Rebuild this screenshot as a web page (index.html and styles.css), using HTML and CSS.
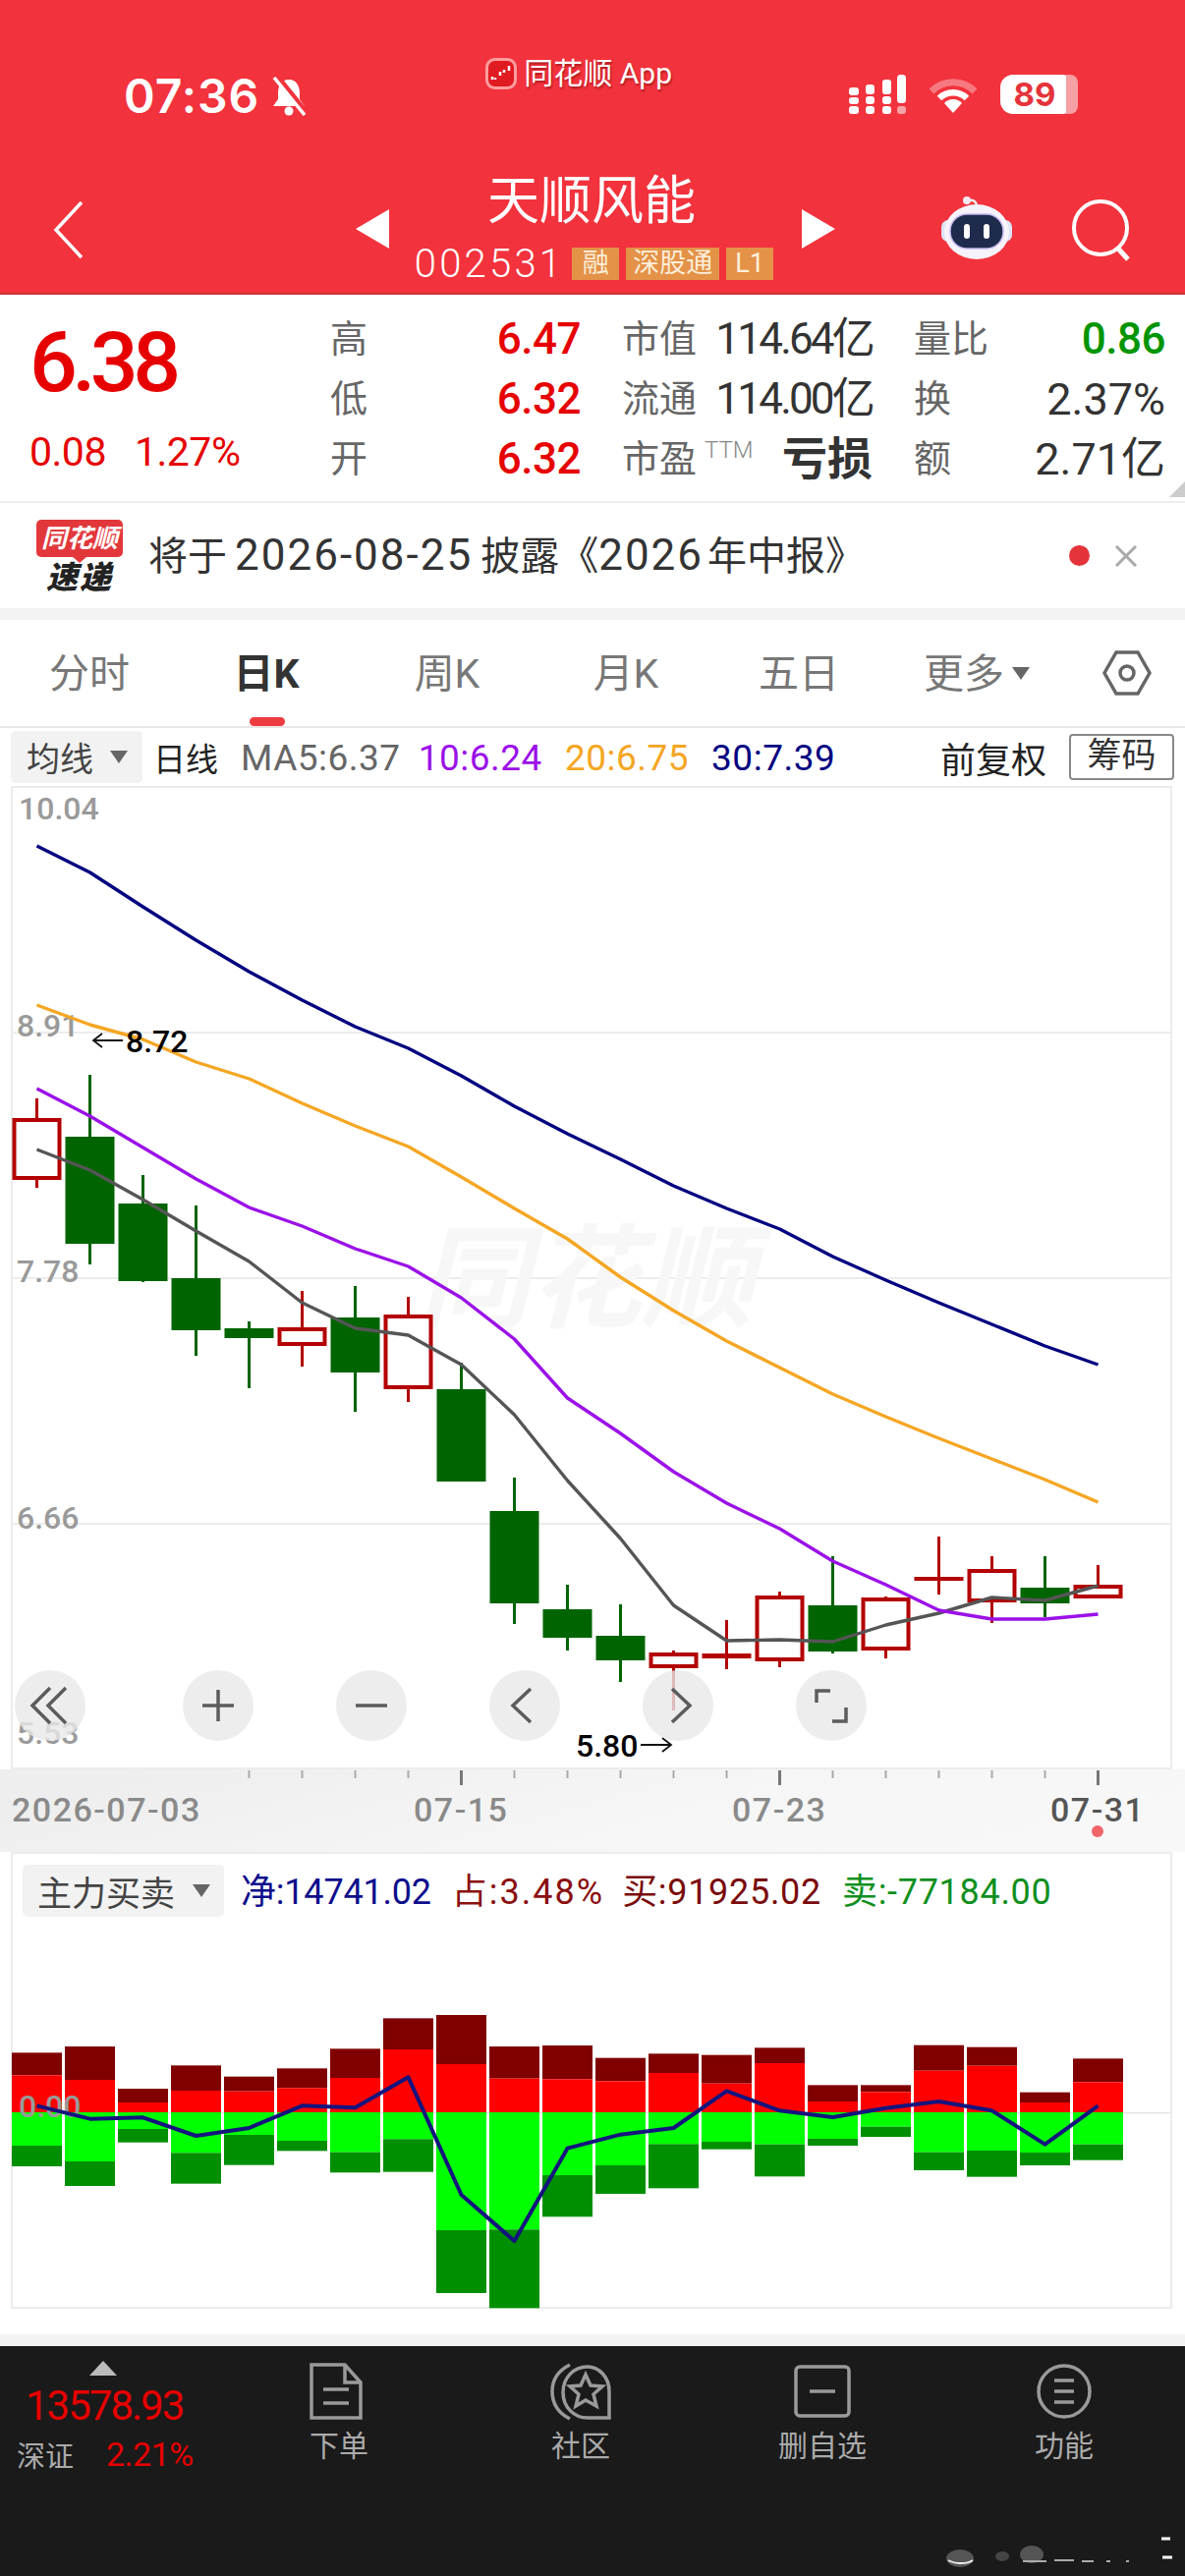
FILE: index.html
```html
<!DOCTYPE html>
<html lang="zh-CN">
<head>
    <meta charset="UTF-8">
    <meta name="viewport" content="width=device-width, initial-scale=1.0">
    <title>天顺风能 002531</title>
    <link rel="stylesheet" href="styles.css">
</head>
<body>

<div class="page">

    <!-- top red header -->
    <header class="header">
        <div class="status-bar">
            <div class="status-left">
                <span class="clock">07:36</span>
                <svg class="bell" viewBox="0 0 40 40">
                    <path d="M20 3C12 3 9 10 9 17v6L4 30H36L31 23V17C31 10 28 3 20 3Z" fill="#fff"/>
                    <circle cx="20" cy="35" r="4.5" fill="#fff"/>
                    <path d="M8 1L38 38" stroke="#f2323c" stroke-width="7"/>
                    <path d="M5 1L36 39" stroke="#fff" stroke-width="3.5"/>
                </svg>
            </div>
            <div class="app-tag">
                <svg class="app-logo" viewBox="0 0 32 32">
                    <rect x="1.5" y="1.5" width="29" height="29" rx="8" fill="#e11b22" stroke="#ff9d9d" stroke-width="3"/>
                    <path d="M7 22v-3M10 22v-2M15 18v-4M19 15v-3M24 13V8" stroke="#fff" stroke-width="2.5"/>
                </svg>
                <span class="app-name">同花顺 App</span>
            </div>
            <div class="status-right">
                <svg class="signal" viewBox="0 0 58 40">
                    <g fill="#fff">
                        <rect x="0" y="13" width="10" height="8" rx="3"/>
                        <rect x="0" y="23" width="10" height="7" rx="3"/>
                        <rect x="0" y="32" width="10" height="8" rx="3"/>
                        <rect x="17" y="10" width="9" height="10" rx="3"/>
                        <rect x="17" y="22" width="9" height="8" rx="3"/>
                        <rect x="17" y="32" width="9" height="8" rx="3"/>
                        <rect x="34" y="5" width="9" height="15" rx="3"/>
                        <rect x="34" y="22" width="9" height="8" rx="3"/>
                        <rect x="34" y="32" width="9" height="8" rx="3"/>
                        <rect x="49" y="0" width="9" height="29" rx="3.5"/>
                        <rect x="49" y="32" width="9" height="8" rx="3" opacity="0.55"/>
                    </g>
                </svg>
                <svg class="wifi" viewBox="0 0 50 38">
                    <path d="M3 15A31 31 0 0 1 47 15" fill="none" stroke="#fff" stroke-opacity="0.35" stroke-width="7"/>
                    <path d="M11 22A20 20 0 0 1 39 22" fill="none" stroke="#fff" stroke-width="6.5"/>
                    <path d="M25 37L16 27A12 12 0 0 1 34 27Z" fill="#fff"/>
                </svg>
                <div class="battery"><span>89</span></div>
            </div>
        </div>

        <div class="nav">
            <svg class="back" viewBox="0 0 34 60">
                <path d="M30 2L4 30L30 58" fill="none" stroke="#fff" stroke-width="3.5"/>
            </svg>
            <div class="nav-center">
                <div class="arrow-left"></div>
                <div class="stock-title">
                    <div class="stock-name">天顺风能</div>
                    <div class="stock-code">
                        <span class="code">002531</span>
                        <span class="tag tag-rong">融</span>
                        <span class="tag tag-sgt">深股通</span>
                        <span class="tag tag-l1">L1</span>
                    </div>
                </div>
                <div class="arrow-right"></div>
            </div>
            <svg class="robot" viewBox="0 0 72 66">
                <path d="M26 9C26 4 33 3 36 9" fill="none" stroke="#eee" stroke-width="2.5"/>
                <circle cx="26" cy="5" r="4" fill="#f3e9f3"/>
                <rect x="0" y="25" width="72" height="22" rx="7" fill="#dfe3f5"/>
                <ellipse cx="36" cy="37" rx="33" ry="28" fill="#f6f3fb"/>
                <rect x="9" y="19" width="54" height="35" rx="17" fill="#1e2b4d" stroke="#c9b8ef" stroke-width="1.5"/>
                <rect x="23" y="29" width="6" height="15" rx="3" fill="#fff"/>
                <rect x="43" y="29" width="6" height="15" rx="3" fill="#fff"/>
            </svg>
            <svg class="search" viewBox="0 0 62 64">
                <circle cx="30" cy="30" r="27" fill="none" stroke="#fff" stroke-width="4"/>
                <path d="M48 51L58 62" stroke="#fff" stroke-width="5"/>
            </svg>
        </div>
    </header>

    <!-- quote block -->
    <section class="stats">
        <div class="quote">
            <div class="price">6.38</div>
            <div class="change"><span>0.08</span><span>1.27%</span></div>
        </div>
        <div class="stat-grid">
            <div class="cell"><span class="lab">高</span><span class="val up">6.47</span></div>
            <div class="cell"><span class="lab">市值</span><span class="val tight">114.64亿</span></div>
            <div class="cell"><span class="lab">量比</span><span class="val down">0.86</span></div>
            <div class="cell"><span class="lab">低</span><span class="val up">6.32</span></div>
            <div class="cell"><span class="lab">流通</span><span class="val tight">114.00亿</span></div>
            <div class="cell"><span class="lab">换</span><span class="val">2.37%</span></div>
            <div class="cell"><span class="lab">开</span><span class="val up">6.32</span></div>
            <div class="cell"><span class="lab">市盈<sup class="ttm">TTM</sup></span><span class="val loss">亏损</span></div>
            <div class="cell"><span class="lab">额</span><span class="val">2.71亿</span></div>
        </div>
        <div class="corner"></div>
    </section>

    <!-- notice -->
    <section class="notice">
        <div class="notice-logo">
            <div class="logo-top">同花顺</div>
            <div class="logo-bottom">速递</div>
        </div>
        <div class="notice-text">将于<span class="num">2026-08-25</span>披露《<span class="num num-year">2026</span>年中报》</div>
        <span class="notice-dot"></span>
        <svg class="notice-close" viewBox="0 0 24 22">
            <path d="M2 1L22 21M22 1L2 21" stroke="#aaa" stroke-width="3"/>
        </svg>
    </section>

    <div class="band"></div>

    <!-- period tabs -->
    <nav class="tabs">
        <div class="tab">分时</div>
        <div class="tab active">日K</div>
        <div class="tab">周K</div>
        <div class="tab">月K</div>
        <div class="tab tab-five">五日</div>
        <div class="tab tab-more">更多<span class="caret-small"></span></div>
        <svg class="tab-gear" viewBox="0 0 50 46">
            <path d="M14 2H36L48 23L36 44H14L2 23Z" fill="none" stroke="#666" stroke-width="3.5"/>
            <circle cx="25" cy="23" r="7" fill="none" stroke="#666" stroke-width="3.5"/>
        </svg>
    </nav>

    <!-- MA legend -->
    <div class="ma-row">
        <div class="pill ma-pill">均线<span class="caret"></span></div>
        <span class="ma-day">日线</span>
        <span class="ma ma5">MA5:6.37</span>
        <span class="ma ma10">10:6.24</span>
        <span class="ma ma20">20:6.75</span>
        <span class="ma ma30">30:7.39</span>
        <span class="fq">前复权</span>
        <span class="chip-btn">筹码</span>
    </div>

    <!-- candles -->
    <div class="price-box">
        <svg id="priceChart" class="chart" viewBox="13 802 1178 997" width="1178" height="997"></svg>
        <div class="zoom-bar">
            <div class="zoom-btn zoom-first"><svg viewBox="0 0 72 72"><path d="M36 18L18 36L36 54M52 18L34 36L52 54" /></svg></div>
            <div class="zoom-btn"><svg viewBox="0 0 72 72"><path d="M36 20V52M20 36H52" /></svg></div>
            <div class="zoom-btn"><svg viewBox="0 0 72 72"><path d="M20 36H52" /></svg></div>
            <div class="zoom-btn"><svg viewBox="0 0 72 72"><path d="M42 19L24 36L42 53" /></svg></div>
            <div class="zoom-btn"><svg viewBox="0 0 72 72"><path d="M30 19L48 36L30 53" /></svg></div>
            <div class="zoom-btn"><svg viewBox="0 0 72 72"><path d="M21 33V21H35M51 38V52H37" /></svg></div>
        </div>
    </div>

    <svg id="axisChart" class="axis" viewBox="0 1801 1206 84" width="1206" height="84"></svg>

    <!-- money flow -->
    <div class="flow-box">
        <div class="flow-head">
            <div class="pill flow-pill">主力买卖<span class="caret"></span></div>
            <span class="flow-net">净:14741.02</span>
            <span class="flow-ratio">占:3.48%</span>
            <span class="flow-buy">买:91925.02</span>
            <span class="flow-sell">卖:-77184.00</span>
        </div>
        <svg id="flowChart" class="chart" viewBox="13 1962 1178 386" width="1178" height="386"></svg>
    </div>

    <div class="gap"></div>
    <div class="band"></div>

    <!-- dark dock -->
    <footer class="dock">
        <div class="ticker">
            <div class="ticker-up"></div>
            <div class="ticker-price">13578.93</div>
            <div class="ticker-row"><span class="ticker-name">深证</span><span class="ticker-pct">2.21%</span></div>
        </div>
        <div class="dock-item dock-order">
            <svg viewBox="0 0 54 58" width="54" height="58">
                <path d="M2 2H36L52 20V56H2Z" /><path d="M36 2V20H52M14 27H40M14 41H40" />
            </svg>
            <span>下单</span>
        </div>
        <div class="dock-item">
            <svg viewBox="0 0 62 60" width="62" height="60">
                <path d="M20 3C6 10 2 20 2 30C2 42 8 52 20 58" />
                <path d="M60 57H38C24 57 13 46 13 31C13 16 24 5 38 5C50 5 60 16 60 30Z" />
                <path d="M36 13L41 24L53 25L44 33L47 45L36 39L26 45L29 33L20 25L31 24Z" />
            </svg>
            <span>社区</span>
        </div>
        <div class="dock-item">
            <svg viewBox="0 0 58 54" width="58" height="54">
                <rect x="2" y="2" width="54" height="50" rx="4" /><path d="M16 27H42" />
            </svg>
            <span>删自选</span>
        </div>
        <div class="dock-item">
            <svg viewBox="0 0 56 56" width="56" height="56">
                <circle cx="28" cy="28" r="26" /><path d="M18 17H38M18 28H38M18 39H38" />
            </svg>
            <span>功能</span>
        </div>
        <svg class="dock-mark" viewBox="0 0 246 82">
            <ellipse cx="17" cy="64" rx="14" ry="9" fill="#555"/>
            <path d="M5 66C12 70 24 70 30 66" stroke="#eee" stroke-width="2" fill="none"/>
            <ellipse cx="60" cy="62" rx="7" ry="5" fill="#444"/>
            <ellipse cx="90" cy="60" rx="12" ry="9" fill="#555"/>
            <path d="M81 67H105M113 66H133M141 67H153M166 67H170M186 67H189" stroke="#aaa" stroke-width="2"/>
            <path d="M222 44H231M223 63H233" stroke="#fff" stroke-width="3"/>
        </svg>
    </footer>

</div>

<script>
    const NS = 'http://www.w3.org/2000/svg';
    const cx = i => 37.5 + 54 * i;

    // [wick top, body top, body bottom, wick bottom, kind]  r = hollow red, f = flat red, g = solid green
    const candles = [
        [1118, 1138, 1201, 1209, 'r'],
        [1094, 1157, 1266, 1287, 'g'],
        [1196, 1225, 1304, 1305, 'g'],
        [1227, 1301, 1354, 1380, 'g'],
        [1345, 1352, 1362, 1413, 'g'],
        [1314, 1351, 1370, 1391, 'r'],
        [1309, 1341, 1397, 1437, 'g'],
        [1320, 1338, 1414, 1427, 'r'],
        [1387, 1414, 1508, 1508, 'g'],
        [1504, 1538, 1632, 1653, 'g'],
        [1613, 1638, 1667, 1680, 'g'],
        [1633, 1665, 1690, 1712, 'g'],
        [1680, 1682, 1698, 1741, 'r'],
        [1649, 1683, 1688, 1699, 'f'],
        [1620, 1624, 1691, 1697, 'r'],
        [1584, 1634, 1681, 1683, 'g'],
        [1625, 1626, 1680, 1688, 'r'],
        [1564, 1605, 1609, 1623, 'f'],
        [1584, 1597, 1631, 1652, 'r'],
        [1584, 1616, 1632, 1646, 'g'],
        [1593, 1613, 1627, 1627, 'r']
    ];

    const maLines = {
        ma5: [1170, 1191, 1221, 1253, 1284, 1326, 1352, 1359, 1389, 1440, 1507, 1566, 1634, 1670, 1669, 1671, 1654, 1642, 1626, 1629, 1614],
        ma10: [1108, 1136, 1168, 1200, 1229, 1248, 1271, 1289, 1321, 1363, 1423, 1459, 1498, 1530, 1556, 1589, 1613, 1639, 1648, 1648, 1643],
        ma20: [1023, 1043, 1058, 1081, 1098, 1123, 1146, 1167, 1198, 1230, 1261, 1300, 1334, 1365, 1392, 1419, 1442, 1464, 1485, 1506, 1529],
        ma30: [861, 888, 923, 957, 989, 1018, 1045, 1067, 1095, 1126, 1154, 1180, 1207, 1230, 1251, 1279, 1303, 1326, 1348, 1370, 1389]
    };

    // y values of the four stacked bands: dark red top, red top, green bottom, dark green bottom
    const flows = [
        [628, 697, 912, 975], [609, 711, 960, 1035], [738, 780, 861, 902], [667, 744, 934, 1028],
        [701, 746, 879, 971], [676, 736, 897, 928], [616, 705, 932, 994], [523, 618, 892, 992],
        [513, 663, 1170, 1362], [609, 707, 1168, 1408], [606, 709, 1002, 1129], [644, 715, 972, 1059],
        [631, 690, 907, 1042], [635, 722, 900, 923], [613, 660, 908, 1006], [727, 777, 891, 912],
        [727, 748, 854, 885], [605, 683, 932, 987], [611, 668, 927, 1007], [749, 780, 933, 972],
        [646, 718, 908, 956]
    ];
    const flowLine = [790, 830, 826, 882, 858, 790, 796, 703, 1062, 1203, 920, 878, 858, 745, 805, 825, 797, 777, 805, 908, 790];
    const fy = v => 1880 + v / 3;

    function add(svg, tag, attrs, text) {
        const el = document.createElementNS(NS, tag);
        for (const key in attrs) el.setAttribute(key, attrs[key]);
        if (text) el.textContent = text;
        svg.appendChild(el);
        return el;
    }

    function drawPrice() {
        const svg = document.getElementById('priceChart');
        [1051, 1301, 1551].forEach(y => add(svg, 'line', { x1: 13, x2: 1191, y1: y, y2: y, class: 'grid' }));
        add(svg, 'text', { x: 425, y: 1342, class: 'watermark' }, '同花顺');
        [['10.04', 19, 834], ['8.91', 17, 1055], ['7.78', 17, 1305], ['6.66', 17, 1556], ['5.53', 17, 1775]]
            .forEach(t => add(svg, 'text', { x: t[1], y: t[2], class: 'y-label' }, t[0]));

        candles.forEach((c, i) => {
            const x = cx(i);
            const color = c[4] === 'g' ? 'c-green' : 'c-red';
            add(svg, 'line', { x1: x, x2: x, y1: c[0], y2: c[3], class: 'wick ' + color });
            if (c[4] === 'r') {
                add(svg, 'rect', { x: x - 23, y: c[1] + 2, width: 46, height: c[2] - c[1] - 4, class: 'hollow' });
            } else {
                add(svg, 'rect', { x: x - 25, y: c[1], width: 50, height: c[2] - c[1], class: 'solid ' + color });
            }
        });

        for (const name in maLines) {
            const pts = maLines[name].map((y, i) => cx(i) + ',' + y).join(' ');
            add(svg, 'polyline', { points: pts, class: 'ma-line ' + name });
        }

        add(svg, 'path', { d: 'M125 1059H95M104 1052L95 1059L104 1066', class: 'mark-arrow' });
        add(svg, 'text', { x: 128, y: 1071, class: 'mark' }, '8.72');
        add(svg, 'text', { x: 586, y: 1788, class: 'mark' }, '5.80');
        add(svg, 'path', { d: 'M652 1776H683M674 1769L683 1776L674 1783', class: 'mark-arrow' });
    }

    function drawAxis() {
        const svg = document.getElementById('axisChart');
        for (let i = 4; i < 21; i++) {
            const major = i === 8 || i === 14 || i === 20;
            add(svg, 'line', { x1: cx(i), x2: cx(i), y1: 1802, y2: major ? 1817 : 1810, class: major ? 'tick major' : 'tick' });
        }
        add(svg, 'text', { x: 12, y: 1854, class: 'date' }, '2026-07-03');
        add(svg, 'text', { x: 421, y: 1854, class: 'date' }, '07-15');
        add(svg, 'text', { x: 745, y: 1854, class: 'date' }, '07-23');
        add(svg, 'text', { x: 1069, y: 1854, class: 'date date-last' }, '07-31');
        add(svg, 'circle', { cx: 1117, cy: 1864, r: 6, class: 'date-dot' });
    }

    function drawFlow() {
        const svg = document.getElementById('flowChart');
        add(svg, 'line', { x1: 13, x2: 1191, y1: fy(812), y2: fy(812), class: 'grid' });
        flows.forEach((f, i) => {
            const x = cx(i) - 25.5;
            const zero = fy(810);
            add(svg, 'rect', { x, y: fy(f[0]), width: 51, height: fy(f[1]) - fy(f[0]), class: 'b-darkred' });
            add(svg, 'rect', { x, y: fy(f[1]), width: 51, height: zero - fy(f[1]), class: 'b-red' });
            add(svg, 'rect', { x, y: zero, width: 51, height: fy(f[2]) - zero, class: 'b-green' });
            add(svg, 'rect', { x, y: fy(f[2]), width: 51, height: fy(f[3]) - fy(f[2]), class: 'b-darkgreen' });
        });
        add(svg, 'text', { x: 19, y: 2155, class: 'y-label' }, '0.00');
        add(svg, 'polyline', { points: flowLine.map((v, i) => cx(i) + ',' + fy(v)).join(' '), class: 'flow-line' });
    }

    drawPrice();
    drawAxis();
    drawFlow();
</script>

</body>
</html>
```

FILE: styles.css
```css
* {
    box-sizing: border-box;
}
body {
    margin: 0;
    padding: 0;
    background-color: #fff;
    font-family: Roboto, "Noto Sans CJK SC", sans-serif;
    color: #333;
}
.page {
    width: 1206px;
    height: 2622px;
    overflow: hidden;
    display: flex;
    flex-direction: column;
}

/* header */
.header {
    height: 300px;
    flex: none;
    background-color: #f2323c;
    color: #fff;
    border-bottom: 2px solid #c9353b;
}
.status-bar {
    height: 120px;
    display: flex;
    position: relative;
}
.status-left {
    display: flex;
    align-items: center;
    margin: 77px 0 0 126px;
    height: 42px;
}
.clock {
    font-family: Inter, sans-serif;
    font-size: 48px;
    font-weight: 600;
    letter-spacing: 1px;
    line-height: 42px;
}
.bell {
    width: 40px;
    height: 40px;
    margin-left: 10px;
}
.app-tag {
    display: flex;
    align-items: center;
    margin: 59px 0 0 180px;
    height: 32px;
}
.app-logo {
    width: 32px;
    height: 32px;
}
.app-name {
    margin-left: 7px;
    font-size: 30px;
    line-height: 32px;
    text-shadow: 1px 2px 2px rgba(90, 0, 0, 0.45);
    white-space: nowrap;
}
.status-right {
    display: flex;
    align-items: flex-start;
    margin: 76px 0 0 auto;
    padding-right: 118px;
}
.signal {
    width: 58px;
    height: 40px;
}
.wifi {
    width: 50px;
    height: 38px;
    margin: 2px 0 0 23px;
}
.battery {
    width: 70px;
    height: 40px;
    margin-left: 23px;
    background-color: #fff;
    border-radius: 13px 6px 6px 13px;
    color: #e5333b;
    font-family: Inter, sans-serif;
    font-size: 33px;
    font-weight: 700;
    line-height: 40px;
    text-align: center;
    position: relative;
}
.battery::after {
    content: "";
    position: absolute;
    left: 67px;
    top: 0;
    width: 12px;
    height: 40px;
    border-radius: 0 8px 8px 0;
    background-color: #f6a0a4;
}
.nav {
    height: 178px;
    display: flex;
    align-items: flex-start;
    position: relative;
}
.back {
    width: 34px;
    height: 60px;
    margin: 84px 0 0 53px;
}
.nav-center {
    display: flex;
    margin-left: 275px;
    width: 488px;
    height: 120px;
}
.arrow-left, .arrow-right {
    width: 0;
    height: 0;
    margin-top: 93px;
    border-top: 20px solid transparent;
    border-bottom: 20px solid transparent;
}
.arrow-left {
    border-right: 34px solid #fff;
}
.arrow-right {
    border-left: 34px solid #fff;
}
.stock-title {
    flex: 1;
    display: flex;
    flex-direction: column;
    align-items: center;
}
.stock-name {
    font-size: 53px;
    line-height: 70px;
    margin-top: 50px;
    font-weight: 400;
    margin-left: -8px;
}
.stock-code {
    display: flex;
    align-items: center;
    height: 34px;
    margin-top: 11px;
    margin-left: -3px;
}
.code {
    font-size: 40px;
    font-weight: 300;
    letter-spacing: 3.2px;
    margin-right: 8px;
}
.tag {
    height: 33px;
    padding: 0 4px;
    margin-right: 7px;
    background-color: #e39248;
    color: #fdeeda;
    font-size: 27px;
    line-height: 33px;
    text-align: center;
}
.tag-rong {
    width: 48px;
}
.tag-sgt {
    width: 95px;
    padding: 0;
}
.tag-l1 {
    width: 48px;
    margin-right: 0;
}
.robot {
    width: 72px;
    height: 66px;
    margin: 79px 0 0 108px;
}
.search {
    width: 62px;
    height: 64px;
    margin: 82px 0 0 60px;
}

/* quote block */
.stats {
    height: 212px;
    flex: none;
    display: flex;
    border-bottom: 2px solid #eee;
    position: relative;
}
.quote {
    width: 336px;
    flex: none;
    padding-left: 30px;
    color: #e60000;
}
.price {
    font-size: 86px;
    font-weight: 500;
    line-height: 70px;
    letter-spacing: -5.5px;
    margin-top: 34px;
}
.change {
    display: flex;
    gap: 29px;
    font-size: 41px;
    line-height: 40px;
    margin-top: 36px;
    letter-spacing: -0.5px;
}
.stat-grid {
    display: grid;
    grid-template-columns: 255px 255px 256px;
    grid-auto-rows: 61px;
    column-gap: 42px;
    padding-top: 15px;
}
.cell {
    display: flex;
    justify-content: space-between;
    align-items: center;
}
.lab {
    font-size: 38px;
    color: #666;
    white-space: nowrap;
    line-height: 61px;
}
.val {
    font-size: 45px;
    font-weight: 400;
    line-height: 61px;
    color: #333;
    white-space: nowrap;
}
.val.tight {
    font-size: 44px;
    letter-spacing: -2.8px;
}
.val.up {
    font-size: 44px;
    color: #e60000;
    font-weight: 500;
    letter-spacing: -0.5px;
}
.val.down {
    font-size: 44px;
    color: #009500;
    font-weight: 500;
    letter-spacing: -0.5px;
}
.val.loss {
    font-size: 46px;
    font-weight: 700;
}
.ttm {
    font-size: 24px;
    color: #888;
    font-weight: 300;
    margin-left: 8px;
    vertical-align: 14px;
    line-height: 0;
}
.corner {
    position: absolute;
    right: 0;
    bottom: 4px;
    width: 0;
    height: 0;
    border-left: 16px solid transparent;
    border-bottom: 16px solid #ccc;
}

/* notice */
.notice {
    height: 107px;
    flex: none;
    display: flex;
    align-items: center;
}
.notice-logo {
    width: 88px;
    margin-left: 37px;
    flex: none;
    text-align: center;
}
.logo-top {
    height: 38px;
    background-color: #e2373b;
    border-radius: 5px;
    color: #fff;
    font-size: 26px;
    font-weight: 700;
    font-style: italic;
    line-height: 38px;
    white-space: nowrap;
    position: relative;
}
.logo-top::after {
    content: "";
    position: absolute;
    left: 36px;
    bottom: -6px;
    border-left: 8px solid transparent;
    border-right: 8px solid transparent;
    border-top: 7px solid #e2373b;
}
.logo-bottom {
    color: #222;
    font-size: 32px;
    font-weight: 900;
    font-style: italic;
    line-height: 30px;
    margin-top: 6px;
    letter-spacing: 2px;
}
.notice-text {
    margin-left: 26px;
    font-size: 40px;
    line-height: 50px;
    color: #333;
    white-space: nowrap;
}
.num {
    font-size: 44px;
    letter-spacing: 2px;
    margin: 0 8px;
}
.num-year {
    margin: 0 4px 0 0;
}
.notice-dot {
    width: 21px;
    height: 21px;
    border-radius: 50%;
    background-color: #e5333b;
    margin-left: auto;
}
.notice-close {
    width: 24px;
    height: 22px;
    margin: 0 48px 0 25px;
}
.band {
    height: 12px;
    flex: none;
    background-color: #f3f3f3;
}

/* tabs */
.tabs {
    height: 110px;
    flex: none;
    display: grid;
    grid-template-columns: repeat(6, 182px) 1fr;
    align-items: center;
    border-bottom: 2px solid #e8e8e8;
    padding-bottom: 2px;
}
.tab {
    font-size: 41px;
    color: #777;
    text-align: center;
    position: relative;
    line-height: 106px;
    padding-top: 2px;
}
.tab-five {
    padding-right: 12px;
}
.tab-more {
    padding-right: 14px;
}
.tab.active {
    color: #333;
    font-weight: 700;
    padding-right: 4px;
}
.tab.active::after {
    content: "";
    position: absolute;
    left: 72px;
    bottom: 0;
    width: 36px;
    height: 9px;
    border-radius: 5px;
    background-color: #ee3b40;
}
.caret-small {
    display: inline-block;
    margin-left: 8px;
    border-left: 9px solid transparent;
    border-right: 9px solid transparent;
    border-top: 13px solid #666;
    vertical-align: 8px;
}
.tab-gear {
    width: 50px;
    height: 46px;
    justify-self: center;
    margin-left: -4px;
}

/* MA legend */
.ma-row {
    height: 59px;
    flex: none;
    display: flex;
    align-items: center;
    gap: 23px;
    padding: 0 11px;
    font-size: 36px;
    white-space: nowrap;
}
.pill {
    background-color: #f2f2f2;
    border-radius: 5px;
    color: #444;
    display: flex;
    align-items: center;
}
.ma-pill {
    width: 134px;
    height: 53px;
    padding-left: 16px;
    margin-right: -10px;
    font-size: 34px;
}
.caret {
    margin-left: 17px;
    border-left: 9px solid transparent;
    border-right: 9px solid transparent;
    border-top: 13px solid #666;
}
.ma-day {
    font-size: 33px;
    color: #222;
    margin-left: -2px;
}
.ma {
    font-size: 37px;
    letter-spacing: 0.5px;
    line-height: 59px;
    padding-top: 1px;
}
.ma5 {
    color: #666;
}
.ma10 {
    color: #9b11e8;
    margin-left: -5px;
}
.ma20 {
    color: #f5a623;
}
.ma30 {
    color: #000080;
}
.fq {
    margin-left: auto;
    font-size: 36px;
    color: #222;
}
.chip-btn {
    width: 107px;
    height: 47px;
    border: 2px solid #888;
    border-radius: 4px;
    font-size: 35px;
    line-height: 41px;
    text-align: center;
    color: #333;
}

/* charts */
.price-box {
    height: 1001px;
    width: 1182px;
    margin-left: 11px;
    flex: none;
    border: 2px solid #ececec;
    position: relative;
}
.chart {
    display: block;
    overflow: visible;
}
.zoom-bar {
    position: absolute;
    left: 2px;
    top: 898px;
    display: flex;
    gap: 84px;
}
.zoom-btn {
    width: 72px;
    height: 72px;
    border-radius: 50%;
    background-color: rgba(232, 232, 232, 0.8);
}
.zoom-first {
    margin-right: 15px;
}
.zoom-btn path {
    fill: none;
    stroke: #5c5c5c;
    stroke-width: 3.5;
}
.grid {
    stroke: #e6e6e6;
    stroke-width: 1.5;
}
.watermark {
    font-size: 114px;
    font-weight: 700;
    font-style: italic;
    fill: #f7f7f7;
}
.y-label {
    font-size: 32px;
    font-weight: 500;
    fill: #9a9a9a;
}
.wick {
    stroke-width: 3;
}
.wick.c-red {
    stroke: #b30000;
}
.wick.c-green {
    stroke: #006400;
}
.hollow {
    fill: #fff;
    stroke: #b30000;
    stroke-width: 4;
}
.solid.c-red {
    fill: #b30000;
}
.solid.c-green {
    fill: #006400;
}
.ma-line, .flow-line {
    fill: none;
    stroke-width: 3.4;
    stroke-linejoin: round;
}
.ma-line.ma5 {
    stroke: #555;
}
.ma-line.ma10 {
    stroke: #9b11e8;
}
.ma-line.ma20 {
    stroke: #f5a623;
}
.ma-line.ma30 {
    stroke: #000080;
}
.flow-line {
    stroke: #14147e;
    stroke-width: 4;
}
.mark {
    font-size: 32px;
    font-weight: 500;
    fill: #000;
}
.mark-arrow {
    fill: none;
    stroke: #111;
    stroke-width: 1.8;
}
.axis {
    display: block;
    flex: none;
    background: linear-gradient(165deg, #eeeeee 10%, #f6f6f6 55%, #f8f8f8 100%);
}
.tick {
    stroke: #aaa;
    stroke-width: 2;
}
.tick.major {
    stroke: #777;
    stroke-width: 3;
}
.date {
    font-size: 34px;
    font-weight: 500;
    letter-spacing: 1.5px;
    fill: #8a8a8a;
}
.date-last {
    fill: #555;
}
.date-dot {
    fill: #f0656a;
}
.flow-box {
    height: 465px;
    width: 1182px;
    margin-left: 11px;
    flex: none;
    border: 2px solid #ececec;
}
.flow-head {
    height: 75px;
    display: flex;
    align-items: flex-start;
    gap: 21px;
    padding: 11px 0 0 10px;
    font-size: 36px;
    letter-spacing: 0.7px;
    white-space: nowrap;
}
.flow-head span {
    line-height: 53px;
    padding-top: 2px;
}
.flow-head span.caret {
    padding-top: 0;
}
.flow-pill {
    width: 205px;
    height: 53px;
    padding-left: 15px;
    margin-right: -4px;
    font-size: 35px;
    letter-spacing: 0;
}
.flow-pill .caret {
    margin-left: 18px;
    line-height: 0;
}
.flow-net {
    color: #0d0d8c;
    letter-spacing: -0.2px;
}
.flow-ratio {
    color: #8a0f0f;
    letter-spacing: 2px;
}
.flow-buy {
    color: #7a0a0a;
    margin-left: -3px;
}
.flow-sell {
    color: #0f8f20;
}
.b-darkred {
    fill: #800000;
}
.b-red {
    fill: #ff0000;
}
.b-green {
    fill: #00ff00;
}
.b-darkgreen {
    fill: #008f00;
}
.gap {
    height: 26px;
    flex: none;
}

/* dock */
.dock {
    flex: 1;
    display: flex;
    background-color: #1a1a1a;
    position: relative;
}
.ticker {
    width: 222px;
    flex: none;
    padding-left: 17px;
}
.ticker-up {
    width: 0;
    height: 0;
    margin: 15px 0 0 74px;
    border-left: 14px solid transparent;
    border-right: 14px solid transparent;
    border-bottom: 15px solid #bbb;
}
.ticker-price {
    font-size: 42px;
    color: #e60000;
    line-height: 44px;
    margin: 9px 0 0 9px;
    letter-spacing: -2px;
}
.ticker-row {
    display: flex;
    align-items: center;
    margin-top: 6px;
    gap: 33px;
}
.ticker-name {
    font-size: 29px;
    color: #aaa;
}
.ticker-pct {
    font-size: 34px;
    color: #e60000;
    letter-spacing: -0.5px;
}
.dock-item {
    width: 246px;
    flex: none;
    display: flex;
    flex-direction: column;
    align-items: center;
    padding-top: 16px;
    color: #aaa;
    font-size: 30px;
}
.dock-item svg {
    height: 60px;
    fill: none;
    stroke: #9a9a9a;
    stroke-width: 3.5;
}
.dock-item span {
    margin-top: 6px;
    line-height: 40px;
}
.dock-order svg {
    margin-left: -6px;
}
.dock-mark {
    position: absolute;
    right: 0;
    bottom: 0;
    width: 246px;
    height: 82px;
}
```
